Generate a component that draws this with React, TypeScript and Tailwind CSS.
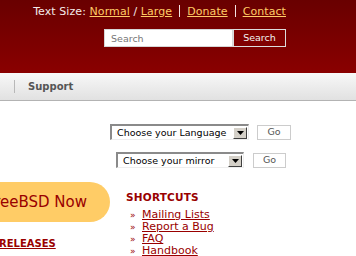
import { useState } from "react";

const font = { fontFamily: '"DejaVu Sans", Verdana, sans-serif' };

function Sep() {
  return <span className="mx-[7px] inline-block h-[12px] w-px bg-[#f3e3e3] align-[-2px]" aria-hidden="true" />;
}

function FakeSelect({ label, width }: { label: string; width: string }) {
  return (
    <div
      className={`flex h-[16px] ${width} items-center justify-between border-t-2 border-l-2 border-b border-r border-t-[#8a8a8a] border-l-[#8a8a8a] border-b-[#eeeeee] border-r-[#eeeeee] bg-white pl-[5px] pr-[1px] text-[9.5px] text-black`}
    >
      <span className="leading-none">{label}</span>
      <span className="flex h-[12px] w-[14px] items-center justify-center border border-t-white border-l-white border-b-[#404040] border-r-[#404040] bg-[#d4d0c8]">
        <svg width="7" height="4" viewBox="0 0 7 4">
          <path d="M0 0h7L3.5 4z" fill="#000" />
        </svg>
      </span>
    </div>
  );
}

function GoButton({ width }: { width: string }) {
  return (
    <button
      type="button"
      className={`flex h-[15px] ${width} items-center justify-center border border-[#cccccc] bg-white text-[9.5px] leading-none text-[#555555]`}
    >
      Go
    </button>
  );
}

const shortcuts = ["Mailing Lists", "Report a Bug", "FAQ", "Handbook"];

export default function App() {
  const [query, setQuery] = useState("");

  return (
    <div className="h-[256px] w-[356px] overflow-hidden bg-white" style={font}>
      {/* header */}
      <div className="flex h-[73px] flex-col items-end bg-gradient-to-b from-[#690000] to-[#8a0000] pr-[70px]">
        <div className="pt-[5px] text-[11px] leading-[13px] tracking-[0.08px] whitespace-nowrap text-[#f4eaea]">
          Text Size:{" "}
          <a href="#" className="text-[#ffcc66] underline">Normal</a> /{" "}
          <a href="#" className="text-[#ffcc66] underline">Large</a>
          <Sep />
          <a href="#" className="text-[#ffcc66] underline">Donate</a>
          <Sep />
          <a href="#" className="text-[#ffcc66] underline">Contact</a>
        </div>
        <form className="mt-[11px] flex h-[18px]" onSubmit={(e) => e.preventDefault()}>
          <input
            value={query}
            onChange={(e) => setQuery(e.target.value)}
            placeholder="Search"
            className="h-[18px] w-[129px] border border-[#d6d6d6] bg-white pl-[6px] text-[9.5px] text-[#333] placeholder:text-[#777] outline-none"
          />
          <button
            type="submit"
            className="h-[18px] w-[53px] border border-[#dcdcdc] bg-[#800000] text-[9.5px] text-[#f2f2f2]"
          >
            Search
          </button>
        </form>
      </div>

      {/* nav */}
      <div className="flex h-[28px] items-center border-b border-[#b3b3b3] bg-gradient-to-b from-[#f8f8f8] to-[#e1e1e1]">
        <span className="ml-[14px] h-[13px] w-px bg-[#b8b8b8]" />
        <span className="ml-[13px] text-[10px] font-bold text-[#555555]">Support</span>
      </div>

      {/* selectors */}
      <div className="flex flex-col">
        <div className="mt-[23px] flex items-center gap-[8px] pl-[110px]">
          <FakeSelect label="Choose your Language" width="w-[139px]" />
          <GoButton width="w-[34px]" />
        </div>
        <div className="mt-[12px] flex items-center gap-[9px] pl-[116px]">
          <FakeSelect label="Choose your mirror" width="w-[128px]" />
          <GoButton width="w-[33px]" />
        </div>
      </div>

      {/* lower */}
      <div className="mt-[14px] flex">
        <div className="flex w-[110px] flex-col overflow-hidden">
          <div className="flex h-[40px] items-center justify-end self-end whitespace-nowrap rounded-full bg-[#ffcc66] pr-[23px] pl-[20px] text-[15px] text-[#990000]">
            Get FreeBSD Now
          </div>
          <a href="#" className="mt-[16px] -ml-px text-[10px] leading-[12px] font-bold text-[#990000] underline whitespace-nowrap">
            RELEASES
          </a>
        </div>
        <div className="ml-[16px] pt-[9px]">
          <h2 className="text-[10.5px] leading-[12px] font-bold tracking-[0.2px] text-[#990000]">SHORTCUTS</h2>
          <ul className="mt-[6px]">
            {shortcuts.map((s) => (
              <li key={s} className="flex pl-[4px] text-[11px] leading-[12px]">
                <span className="w-[12px] text-[9px] text-[#990000]">»</span>
                <a href="#" className="text-[#990000] underline">{s}</a>
              </li>
            ))}
          </ul>
        </div>
      </div>
    </div>
  );
}
